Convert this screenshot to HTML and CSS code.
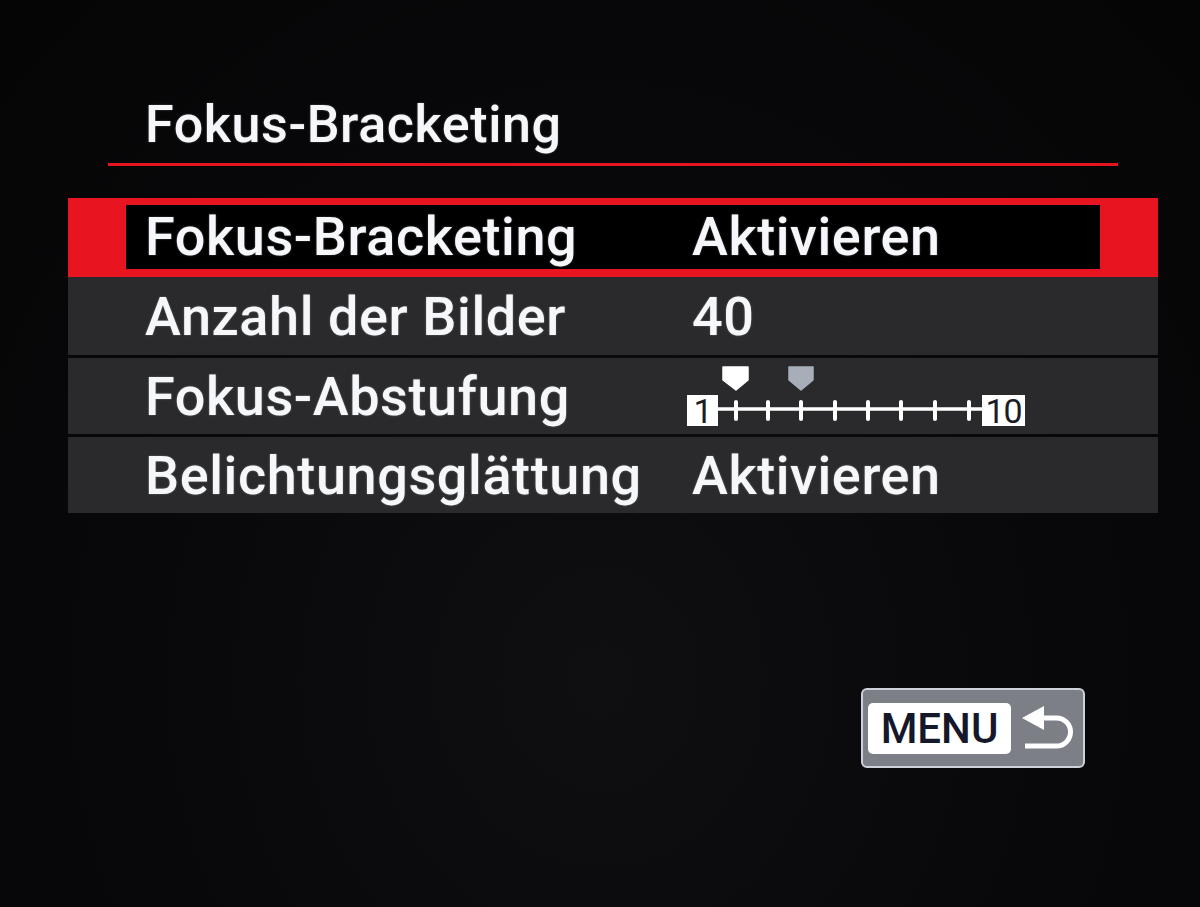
FILE: index.html
```html
<!DOCTYPE html>
<html lang="de">
<head>
  <meta charset="UTF-8">
  <meta name="viewport" content="width=device-width, initial-scale=1.0">
  <title>Fokus-Bracketing</title>
  <link rel="stylesheet" href="styles.css">
</head>
<body>
  <div class="screen">
    <header class="page-title">
      <h1>Fokus-Bracketing</h1>
    </header>

    <ul class="menu">
      <li class="item selected">
        <div class="item-body">
          <span class="label">Fokus-Bracketing</span>
          <span class="value">Aktivieren</span>
        </div>
      </li>
      <li class="item">
        <div class="item-body">
          <span class="label">Anzahl der Bilder</span>
          <span class="value">40</span>
        </div>
      </li>
      <li class="item">
        <div class="item-body">
          <span class="label">Fokus-Abstufung</span>
          <span class="value">
            <!-- Skala 1..10, weißer Zeiger = aktueller Wert, grauer = Vorgabe -->
            <svg class="scale" width="345" height="68" viewBox="0 0 345 68">
              <path class="mark" d="M38 5 H63 V18 L51 28 L38 18 Z" fill="#ffffff" stroke="#ffffff" stroke-width="1.5" stroke-linejoin="round"/>
              <path class="mark" d="M104 5 H128 V18 L116 28 L104 18 Z" fill="#a7aeb9" stroke="#a7aeb9" stroke-width="1.5" stroke-linejoin="round"/>
              <line x1="33" y1="47" x2="297" y2="47" stroke="#fff" stroke-width="3.5"/>
              <g stroke="#fff" stroke-width="4" stroke-linecap="round">
                <line x1="51" y1="40" x2="51" y2="57"/>
                <line x1="83" y1="40" x2="83" y2="57"/>
                <line x1="116" y1="40" x2="116" y2="57"/>
                <line x1="150" y1="40" x2="150" y2="57"/>
                <line x1="183" y1="40" x2="183" y2="57"/>
                <line x1="216" y1="40" x2="216" y2="57"/>
                <line x1="250" y1="40" x2="250" y2="57"/>
                <line x1="284" y1="40" x2="284" y2="57"/>
              </g>
              <rect x="2" y="33" width="31" height="31" fill="#fff"/>
              <text x="17.5" y="61" text-anchor="middle" class="scale-num">1</text>
              <rect x="297" y="33" width="43" height="31" fill="#fff"/>
              <text x="318.5" y="61" text-anchor="middle" class="scale-num">10</text>
            </svg>
          </span>
        </div>
      </li>
      <li class="item">
        <div class="item-body">
          <span class="label">Belichtungsglättung</span>
          <span class="value">Aktivieren</span>
        </div>
      </li>
    </ul>

    <div class="footer">
      <div class="menu-btn">
        <span class="menu-key">MENU</span>
        <svg class="back-icon" width="58" height="50" viewBox="0 0 58 50">
          <polygon points="2,14 24,2 24,26" fill="#fff"/>
          <path d="M22 14 H36.5 A14 14 0 0 1 36.5 42 H5" fill="none" stroke="#fff" stroke-width="5"/>
        </svg>
      </div>
    </div>
  </div>
</body>
</html>
```

FILE: styles.css
```css
body {
  margin: 0;
  height: 907px;
  overflow: hidden;
  background: radial-gradient(ellipse at 50% 75%, #0f0f11 0%, #08080a 55%, #050506 100%);
  font-family: Roboto, "Liberation Sans", sans-serif;
  color: #f5f7fb;
}

.screen {
  display: flex;
  flex-direction: column;
}

/* Titel mit roter Linie */
.page-title {
  margin: 94px 82px 0 108px;
  padding: 0 0 7px 37px;
  border-bottom: 3px solid #e6141e;
}

.page-title h1 {
  margin: 0;
  font-size: 52px;
  font-weight: 500;
  letter-spacing: 0.6px;
  line-height: 62px;
  text-shadow: 0 0 2px rgba(255, 255, 255, 0.35);
}

/* Menüliste */
.menu {
  list-style: none;
  margin: 32px 42px 0 68px;
  padding: 0;
}

.item {
  display: flex;
  height: 78px;
  padding: 0 58px;
  box-sizing: border-box;
  background: #2a2a2c;
}

.item + .item + .item {
  margin-top: 3px;
  height: 76px;
}

.item.selected {
  height: 79px;
  padding: 7px 58px 8px;
  background: #e8141f;
}

.item-body {
  flex: 1;
  display: flex;
  align-items: center;
  padding: 2px 0 0 19px;
  font-size: 54px;
  font-weight: 500;
  letter-spacing: 0.6px;
  line-height: 54px;
  text-shadow: 0 0 2px rgba(255, 255, 255, 0.35);
}

.selected .item-body {
  background: #000;
  padding-top: 0;
}

.label {
  flex: none;
  width: 547px;
}

.value {
  display: flex;
  align-items: center;
}

.scale {
  display: block;
  margin: -2px 0 0 -7px;
}

.scale-num {
  font-family: Roboto, "Liberation Sans", sans-serif;
  font-size: 34px;
  font-weight: 400;
  letter-spacing: -1px;
  fill: #1b1d26;
}

/* MENU-Taste unten rechts */
.footer {
  display: flex;
  justify-content: flex-end;
  margin-top: 175px;
  padding-right: 115px;
}

.menu-btn {
  display: flex;
  align-items: center;
  gap: 9px;
  width: 224px;
  height: 80px;
  box-sizing: border-box;
  padding: 1px 0 0 5px;
  background: #7c7f86;
  border: 2px solid #cdd2da;
  border-radius: 6px;
}

.menu-key {
  display: flex;
  align-items: center;
  justify-content: center;
  width: 143px;
  height: 51px;
  background: #fff;
  border-radius: 5px;
  font-size: 42px;
  font-weight: 500;
  color: #15182a;
}

.back-icon {
  display: block;
}
```
